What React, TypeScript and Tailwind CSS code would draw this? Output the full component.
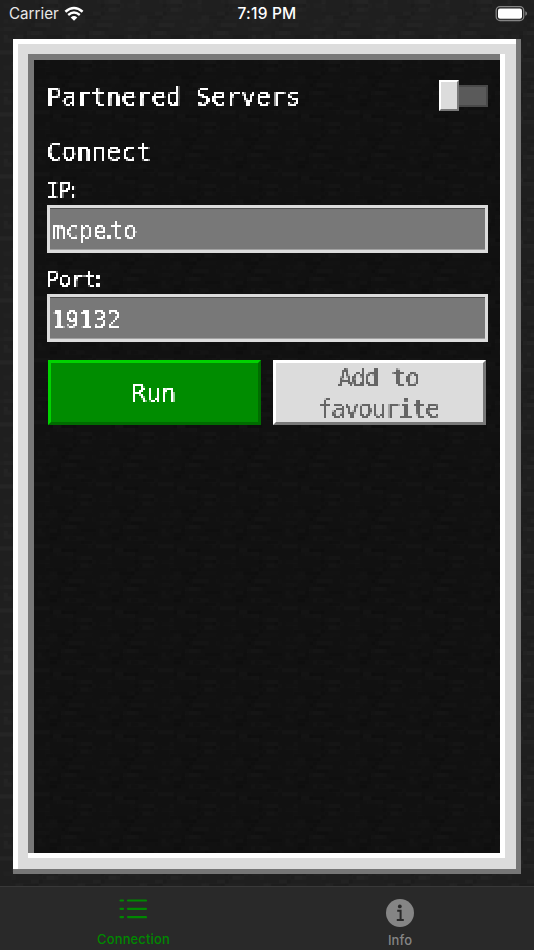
import React from "react";

const MONO = "font-['DejaVu_Sans_Mono',monospace] [filter:url(#pixelate)]";

// Deterministic streaky 16x16 tile, drawn as one repeating pattern.
const streaks: { x: number; y: number; w: number; dark: boolean; o: number }[] = [];
let seed = 17;
const next = () => {
  seed = (seed * 16807) % 2147483647;
  return seed / 2147483647;
};
for (let row = 0; row < 16; row++) {
  for (let n = 0; n < 4; n++) {
    const w = 1 + Math.floor(next() * 5);
    const x = Math.floor(next() * (17 - w));
    streaks.push({ x, y: row, w, dark: next() < 0.5, o: 0.2 + next() * 0.5 });
  }
}

function Texture({ id, base, light, dark }: { id: string; base: string; light: string; dark: string }) {
  return (
    <svg className="absolute inset-0 h-full w-full" aria-hidden="true">
      <defs>
        <pattern id={id} width="62" height="62" patternUnits="userSpaceOnUse">
          <rect width="62" height="62" fill={base} />
          <g transform="scale(3.875)">
            {streaks.map((s, i) => (
              <rect key={i} x={s.x} y={s.y} width={s.w} height="1" fill={s.dark ? dark : light} opacity={s.o} />
            ))}
          </g>
        </pattern>
      </defs>
      <rect width="100%" height="100%" fill={`url(#${id})`} />
    </svg>
  );
}

// Snaps lettering to a 2px grid for the blocky game look.
function PixelFilter() {
  return (
    <svg className="absolute h-0 w-0" aria-hidden="true">
      <filter id="pixelate" x="0" y="0" width="1" height="1" colorInterpolationFilters="sRGB">
        <feFlood x="0" y="0" width="1" height="1" floodColor="#fff" result="dot" />
        <feComposite in="dot" in2="dot" operator="over" x="0" y="0" width="2" height="2" />
        <feTile result="grid" />
        <feComposite in="SourceGraphic" in2="grid" operator="in" result="a" />
        <feOffset in="a" dx="1" dy="0" result="b" />
        <feOffset in="a" dx="0" dy="1" result="c" />
        <feOffset in="a" dx="1" dy="1" result="d" />
        <feMerge>
          <feMergeNode in="a" />
          <feMergeNode in="b" />
          <feMergeNode in="c" />
          <feMergeNode in="d" />
        </feMerge>
        <feComponentTransfer>
          <feFuncA type="linear" slope="3" intercept="-0.6" />
        </feComponentTransfer>
      </filter>
    </svg>
  );
}

function Field({ children }: { children: React.ReactNode }) {
  return (
    <div className="h-[48px] border-[3px] border-[#dcdcdc] bg-[#787878]">
      <div className="flex h-full items-center border-t border-b border-t-[#505050] border-b-[#a0a0a0] pl-px text-[23px] leading-none text-white">
        <span className={`block pt-[4px] pb-[2px] ${MONO}`}>{children}</span>
      </div>
    </div>
  );
}

export default function App() {
  return (
    <div className="relative flex h-[950px] w-[534px] flex-col overflow-hidden bg-[#1e1e1e] font-[Inter,sans-serif]">
      <PixelFilter />
      <Texture id="wall" base="#1f1f1f" light="#272727" dark="#1a1a1a" />

      <header className="relative grid h-[39px] shrink-0 grid-cols-3 items-start pt-[4px] text-[16px] leading-5 text-white">
        <div className="flex items-center pl-[9px]">
          <span className="text-[15.2px] text-[#e8e8e8]">Carrier</span>
          <svg width="20" height="16" viewBox="0 0 20 16" className="ml-[5px]">
            <path d="M1.4 5.8Q10-1.8 18.6 5.8" fill="none" stroke="#fff" strokeWidth="2.5" />
            <path d="M4.2 9Q10 4 15.8 9" fill="none" stroke="#fff" strokeWidth="2.4" />
            <path d="M6.7 11.5Q10 8.6 13.3 11.5L10 14.8Z" fill="#fff" />
          </svg>
        </div>
        <div className="text-center text-[15.5px] font-medium tracking-[0.2px]">7:19 PM</div>
        <div className="flex justify-end pt-[2px] pr-[6px]">
          <svg width="33" height="16" viewBox="0 0 33 16">
            <rect x="1.2" y="0.7" width="27.5" height="13.8" rx="3.8" fill="none" stroke="#858585" strokeWidth="1.3" />
            <rect x="3" y="2.5" width="24" height="10.2" rx="2" fill="#fff" />
            <path d="M30.3 5.2Q32 5.8 32 7.4Q32 9 30.3 9.8Z" fill="#858585" />
          </svg>
        </div>
      </header>

      <main className="relative ml-[13px] h-[835px] w-[508px] shrink-0 bg-[#767676] pr-[5px] pb-[5px]">
        <div className="h-full bg-white pt-[5px] pl-[5px]">
          <div className="h-full bg-[#dcdcdc] pt-[10px] pr-[11px] pb-[11px] pl-[10px]">
            <div className="h-full bg-white pr-[5px] pb-[5px]">
              <div className="h-full bg-[#787878] pt-[6px] pl-[6px]">
                <div className="relative h-full">
                  <Texture id="panel" base="#111111" light="#161616" dark="#0d0d0d" />
                  <div className="relative flex h-full flex-col pr-[12px] pl-[13px] text-white">
                    <div className="mt-[20px] flex h-[32px] items-start justify-between">
                      <h1 className={`mt-[2px] -ml-px text-[25px] leading-[30px] tracking-[-0.1px] whitespace-nowrap ${MONO}`}>Partnered Servers</h1>
                      <div className="flex items-center">
                        <div className="h-[31px] w-[20px] border-2 border-t-white border-r-[#787878] border-b-[#787878] border-l-white bg-[#dcdcdc]" />
                        <div className="h-[22px] w-[29px] border-y-2 border-r-2 border-[#494949] bg-[#5a5a5a]" />
                      </div>
                    </div>
                    <h2 className={`mt-[25px] -ml-px text-[25px] leading-[30px] tracking-[-0.1px] ${MONO}`}>Connect</h2>
                    <div className={`mt-[11px] -ml-px h-[27px] text-[20.5px] leading-[24px] ${MONO}`}>
                      I<span className="tracking-[-4px]">P</span>:
                    </div>
                    <Field>
                      mcp<span className="tracking-[-5px]">e</span><span className="tracking-[-6px]">.</span>to
                    </Field>
                    <div className={`mt-[14px] -ml-px h-[27px] text-[20.5px] leading-[24px] ${MONO}`}>
                      Por<span className="tracking-[-4px]">t</span>:
                    </div>
                    <Field>19132</Field>
                    <div className="mt-[18px] flex h-[65px] gap-[12px] pr-[2px] pl-px text-center text-[25px]">
                      <button className="flex-1 border-[3px] border-t-[#00d300] border-r-[#006c00] border-b-[#006c00] border-l-[#00d300] bg-[#008c00] leading-[58px]">
                        <span className={`block pr-[3px] ${MONO}`}>Run</span>
                      </button>
                      <button className="flex-1 border-[3px] border-t-white border-r-[#787878] border-b-[#787878] border-l-white bg-[#dcdcdc] leading-[31px] tracking-[-1.6px] text-[#656565]">
                        <span className={`-mt-px block pr-[4px] ${MONO}`}>
                          Add to
                          <br />
                          favourite
                        </span>
                      </button>
                    </div>
                  </div>
                </div>
              </div>
            </div>
          </div>
        </div>
      </main>

      <nav className="relative mt-[12px] grid h-[64px] shrink-0 grid-cols-2 border-t border-[#383838] bg-[#292929] text-[13px] leading-4 font-medium">
        <div className="flex flex-col items-center text-[#008800]">
          <svg width="28" height="22" viewBox="0 0 28 22" className="mt-[11px] mr-px" stroke="currentColor" strokeWidth="2.2" strokeLinecap="round">
            <path d="M1.5 2.5H4M9 2.5H27M1.5 10.8H4M9 10.8H27M1.5 19.1H4M9 19.1H27" />
          </svg>
          <span className="mt-[12px] text-[12.9px] tracking-[0.2px]">Connection</span>
        </div>
        <div className="flex flex-col items-center pr-px text-[#858585]">
          <svg width="28" height="28" viewBox="0 0 28 28" className="mt-[12px]">
            <circle cx="14" cy="14" r="14" fill="#858585" />
            <circle cx="13.8" cy="7.4" r="1.9" fill="#292929" />
            <path d="M11.2 11.8H14.6V20.7M10.8 20.9H17.8" fill="none" stroke="#292929" strokeWidth="2" />
          </svg>
          <span className="mt-[5px] tracking-[0.1px]">Info</span>
        </div>
      </nav>
    </div>
  );
}
